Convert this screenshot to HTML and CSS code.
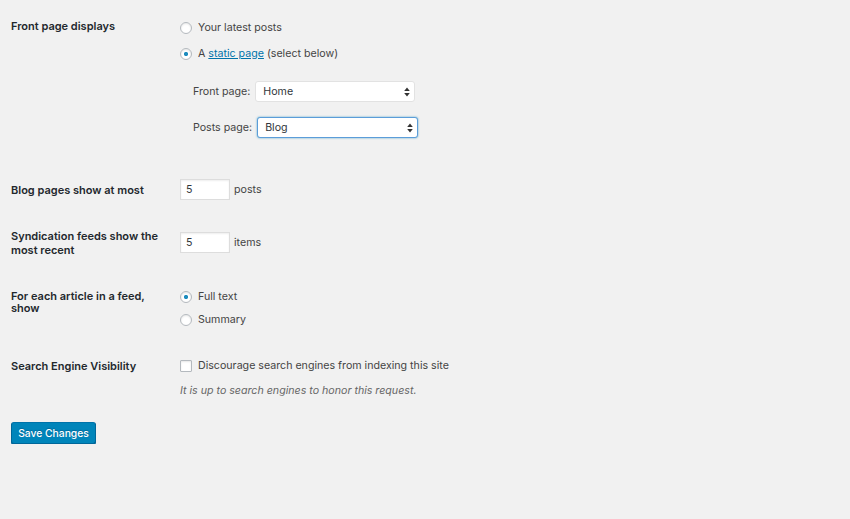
FILE: index.html
```html
<!DOCTYPE html>
<html lang="en">
<head>
  <meta charset="UTF-8">
  <title>Reading Settings</title>
  <link rel="stylesheet" href="styles.css">
</head>
<body>
  <form class="settings">
    <div class="field-row row-front">
      <div class="field-label">Front page displays</div>
      <div class="field-input">
        <label class="choice"><input type="radio" name="show_on_front">Your latest posts</label>
        <label class="choice"><input type="radio" name="show_on_front" checked>A&nbsp;<a href="#">static page</a>&nbsp;(select below)</label>
        <div class="page-pickers">
          <div class="picker">
            <span class="picker-label">Front page:</span>
            <div class="select-box">
              <select><option>Home</option></select>
              <svg width="6" height="10" viewBox="0 0 6 10"><path d="M3 0.5 L5.8 4 H0.2 Z M3 9.5 L5.8 6 H0.2 Z" fill="#333"/></svg>
            </div>
          </div>
          <div class="picker">
            <span class="picker-label">Posts page:</span>
            <div class="select-box focused">
              <select><option>Blog</option></select>
              <svg width="6" height="10" viewBox="0 0 6 10"><path d="M3 0.5 L5.8 4 H0.2 Z M3 9.5 L5.8 6 H0.2 Z" fill="#333"/></svg>
            </div>
          </div>
        </div>
      </div>
    </div>

    <div class="field-row row-posts">
      <div class="field-label offset-4">Blog pages show at most</div>
      <div class="field-input inline">
        <input class="small-text" type="number" value="5"> posts
      </div>
    </div>

    <div class="field-row row-feeds">
      <div class="field-label">Syndication feeds show the most recent</div>
      <div class="field-input inline offset-3">
        <input class="small-text" type="number" value="5"> items
      </div>
    </div>

    <div class="field-row row-article">
      <div class="field-label tight">For each article in a feed, show</div>
      <div class="field-input">
        <label class="choice spaced"><input type="radio" name="rss_use_excerpt" checked>Full text</label>
        <label class="choice"><input type="radio" name="rss_use_excerpt">Summary</label>
      </div>
    </div>

    <div class="field-row row-search">
      <div class="field-label offset-1">Search Engine Visibility</div>
      <div class="field-input">
        <label class="choice"><input type="checkbox">Discourage search engines from indexing this site</label>
        <p class="description">It is up to search engines to honor this request.</p>
      </div>
    </div>

    <div class="submit">
      <button type="submit" class="button-primary">Save Changes</button>
    </div>
  </form>
</body>
</html>
```

FILE: styles.css
```css
body {
  font-family: Inter, "Liberation Sans", sans-serif;
  font-size: 10.65px;
  line-height: 14px;
  background-color: #f1f1f1;
  color: #444;
  margin: 0;
  padding: 0;
}

.settings {
  padding: 19px 0 0 11px;
}

.field-row {
  display: grid;
  grid-template-columns: 169px 1fr;
  align-items: start;
}

.row-posts {
  margin-top: 41px;
}

.row-feeds {
  margin-top: 29px;
}

.row-article {
  margin-top: 32px;
}

.row-search {
  margin-top: 30px;
}

.field-label {
  color: #23282d;
  font-size: 11px;
  font-weight: 600;
  padding-right: 10px;
}

.field-label.tight {
  line-height: 12px;
  margin-top: 1px;
}

.offset-1 { margin-top: 1px; }
.offset-3 { margin-top: 3px; }
.offset-4 { margin-top: 4px; }

.field-input.inline {
  display: flex;
  align-items: center;
  gap: 4px;
}

.choice {
  display: flex;
  align-items: center;
  height: 16px;
  margin-bottom: 10px;
}

.row-front .choice:first-child {
  margin-top: 1px;
}

.choice.spaced {
  margin-bottom: 7px;
}

.choice:last-child {
  margin-bottom: 0;
}

.choice a {
  color: #0073aa;
  text-decoration: underline;
}

.choice input {
  appearance: none;
  -webkit-appearance: none;
  width: 12px;
  height: 12px;
  margin: 0 6px 0 0;
  border: 1px solid #b4b9be;
  background: #fff;
  box-shadow: inset 0 1px 2px rgba(0,0,0,0.1);
  flex-shrink: 0;
}

.choice input[type="radio"] {
  border-radius: 50%;
}

.choice input[type="radio"]:checked {
  background: radial-gradient(circle, #1e8cbe 0 1.8px, #fff 2.4px);
}

.choice input[type="checkbox"] {
  border-radius: 1px;
}

.page-pickers {
  margin: 19px 0 0 13px;
}

.picker {
  display: flex;
  align-items: center;
  gap: 5px;
  margin-bottom: 15px;
}

.picker:last-child {
  margin-bottom: 0;
}

.select-box {
  display: flex;
  align-items: center;
  width: 160px;
  height: 21px;
  box-sizing: border-box;
  background: #fff;
  border: 1px solid #e2e2e2;
  border-radius: 3px;
  padding: 0 4px 0 7px;
}

.select-box.focused {
  border-color: #5b9dd9;
  box-shadow: 0 0 2px rgba(30,140,190,0.8);
  width: 161px;
}

.select-box select {
  appearance: none;
  -webkit-appearance: none;
  flex: 1;
  border: none;
  background: transparent;
  font: inherit;
  color: #32373c;
  padding: 0;
  outline: none;
}

.small-text {
  width: 50px;
  height: 21px;
  box-sizing: border-box;
  border: 1px solid #ddd;
  background: #fff;
  box-shadow: inset 0 1px 2px rgba(0,0,0,0.07);
  font: inherit;
  color: #32373c;
  padding: 0 5px;
  margin: 0;
}

.small-text::-webkit-inner-spin-button,
.small-text::-webkit-outer-spin-button {
  -webkit-appearance: none;
  margin: 0;
}

.description {
  margin: 8px 0 0;
  font-style: italic;
  color: #666;
}

.submit {
  margin-top: 24px;
}

.button-primary {
  font: inherit;
  font-size: 10.3px;
  font-weight: 500;
  white-space: nowrap;
  height: 22px;
  padding: 0;
  width: 85px;
  color: #fff;
  background: #0085ba;
  border: 1px solid #0073aa;
  border-color: #0073aa #006799 #006799;
  border-radius: 3px;
  box-shadow: 0 1px 0 #006799;
  text-shadow: 0 -1px 1px #006799;
  cursor: pointer;
}
```
